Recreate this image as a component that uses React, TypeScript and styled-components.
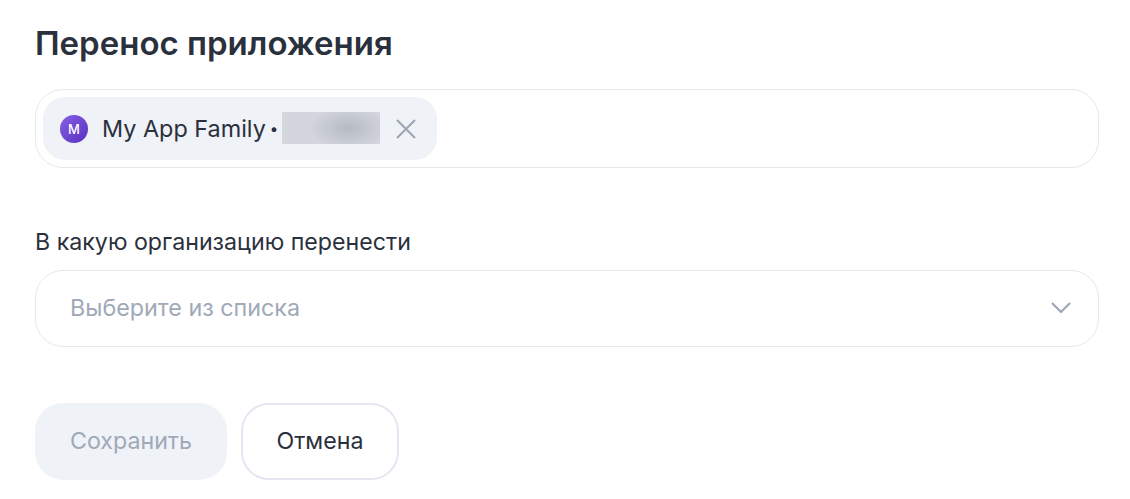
import * as React from 'react';
import styled, { createGlobalStyle } from 'styled-components';

const GlobalStyle = createGlobalStyle`
  html, body {
    margin: 0;
    padding: 0;
    background: #fff;
  }
  * { box-sizing: border-box; }
`;

const Page = styled.div`
  width: 1130px;
  height: 499px;
  padding: 21px 31px 0 35px;
  overflow: hidden;
  font-family: Inter, 'Noto Sans', sans-serif;
  color: #2b303d;
`;

const Title = styled.h1`
  margin: 0 0 24px;
  font-size: 33px;
  line-height: 44px;
  font-weight: 600;
`;

const TagField = styled.div`
  display: flex;
  align-items: center;
  height: 79px;
  padding: 0 7px;
  border: 1px solid #e6e8f0;
  border-radius: 28px;
`;

const Tag = styled.div`
  display: flex;
  align-items: center;
  height: 63px;
  padding: 0 21px 0 17px;
  background: #eff2f7;
  border-radius: 22px;
  font-size: 23.4px;
`;

const Avatar = styled.span`
  display: flex;
  align-items: center;
  justify-content: center;
  width: 28px;
  height: 28px;
  margin-right: 14px;
  border-radius: 50%;
  background: linear-gradient(135deg, #8560e6, #5a2fc0);
  color: #fff;
  font-size: 13px;
  font-weight: 500;
`;

const Dot = styled.span`
  margin-left: 4px;
  font-size: 15px;
`;

const Blur = styled.span`
  width: 98px;
  height: 32px;
  margin: 0 16px 2px 4px;
  background: radial-gradient(ellipse 40px 22px at 68% 50%, #b6bac3, #d3d6dc 100%);
`;

const Label = styled.div`
  margin: 58px 0 12px;
  font-size: 23.2px;
  line-height: 32px;
`;

const Select = styled.div`
  display: flex;
  align-items: center;
  justify-content: space-between;
  height: 77px;
  padding: 0 27px 2px 34px;
  border: 1px solid #e6e8f0;
  border-radius: 28px;
  font-size: 23.3px;
  color: #a0a9b8;
`;

const Actions = styled.div`
  display: flex;
  gap: 14px;
  margin-top: 56px;
`;

const Button = styled.button<{ $primary?: boolean }>`
  height: 77px;
  padding: 0 ${({ $primary }) => ($primary ? '35px' : '33.5px')} 2px;
  border-radius: 28px;
  font-family: inherit;
  font-size: 23.2px;
  border: ${({ $primary }) => ($primary ? 'none' : '2px solid #e4e7f1')};
  background: ${({ $primary }) => ($primary ? '#eff2f7' : '#fff')};
  color: ${({ $primary }) => ($primary ? '#a0a9b8' : '#2b303d')};
`;

export default function App() {
  return (
    <Page>
      <GlobalStyle />
      <Title>Перенос приложения</Title>
      <TagField>
        <Tag>
          <Avatar>M</Avatar>
          My App Family
          <Dot>•</Dot>
          <Blur />
          <svg width='20' height='20' viewBox='0 0 20 20' fill='none' stroke='#9aa5b5' strokeWidth='2'>
            <path d='M1 1l18 18M19 1L1 19' />
          </svg>
        </Tag>
      </TagField>
      <Label>В какую организацию перенести</Label>
      <Select>
        Выберите из списка
        <svg width='20' height='11' viewBox='0 0 20 11' fill='none' stroke='#9aa5b5' strokeWidth='2'>
          <path d='M1 1l9 9 9-9' />
        </svg>
      </Select>
      <Actions>
        <Button $primary>Сохранить</Button>
        <Button>Отмена</Button>
      </Actions>
    </Page>
  );
}
